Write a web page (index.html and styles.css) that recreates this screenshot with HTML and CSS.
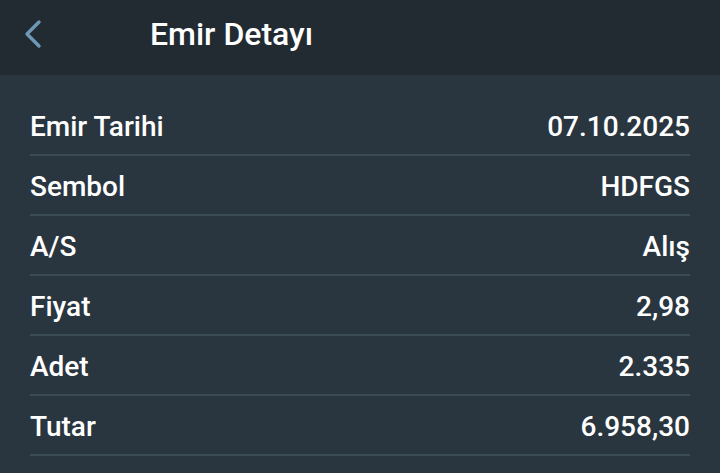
FILE: index.html
```html
<!DOCTYPE html>
<html lang="tr">
<head>
<meta charset="utf-8">
<link rel="stylesheet" href="styles.css">
</head>
<body>
<div class="app">
  <header class="topbar">
    <span class="back">
      <svg width="20" height="30" viewBox="0 0 20 30"><path d="M16 3 L4 15 L16 27" fill="none" stroke="#6d98b6" stroke-width="3.4" stroke-linecap="round" stroke-linejoin="round"/></svg>
    </span>
    <h1 class="title">Emir Detayı</h1>
  </header>
  <main class="list">
    <div class="row"><span class="label">Emir Tarihi</span><span class="value">07.10.2025</span></div>
    <div class="row"><span class="label">Sembol</span><span class="value">HDFGS</span></div>
    <div class="row"><span class="label">A/S</span><span class="value">Alış</span></div>
    <div class="row"><span class="label">Fiyat</span><span class="value">2,98</span></div>
    <div class="row"><span class="label">Adet</span><span class="value">2.335</span></div>
    <div class="row"><span class="label">Tutar</span><span class="value">6.958,30</span></div>
  </main>
</div>
</body>
</html>
```
FILE: styles.css
```css
html, body { margin: 0; padding: 0; }
body {
  width: 720px;
  height: 473px;
  overflow: hidden;
  background: #29363f;
  font-family: Roboto, "Liberation Sans", sans-serif;
  color: #ffffff;
}
.app { display: flex; flex-direction: column; height: 473px; }
.topbar {
  height: 75px;
  background: #222b32;
  display: flex;
  align-items: center;
  flex-shrink: 0;
}
.back {
  display: flex;
  width: 20px;
  height: 30px;
  margin-left: 23px;
  margin-top: -7px;
}
.title {
  margin: -8px 0 0 107px;
  font-size: 32px;
  font-weight: 500;
  line-height: 1;
}
.list {
  display: flex;
  flex-direction: column;
  padding: 21px 30px 0 30px;
}
.row {
  height: 58px;
  border-bottom: 2px solid #3b4b56;
  display: flex;
  justify-content: space-between;
  align-items: center;
  font-size: 28px;
  font-weight: 500;
}
.label, .value { line-height: 1; margin-top: 3px; }
```
